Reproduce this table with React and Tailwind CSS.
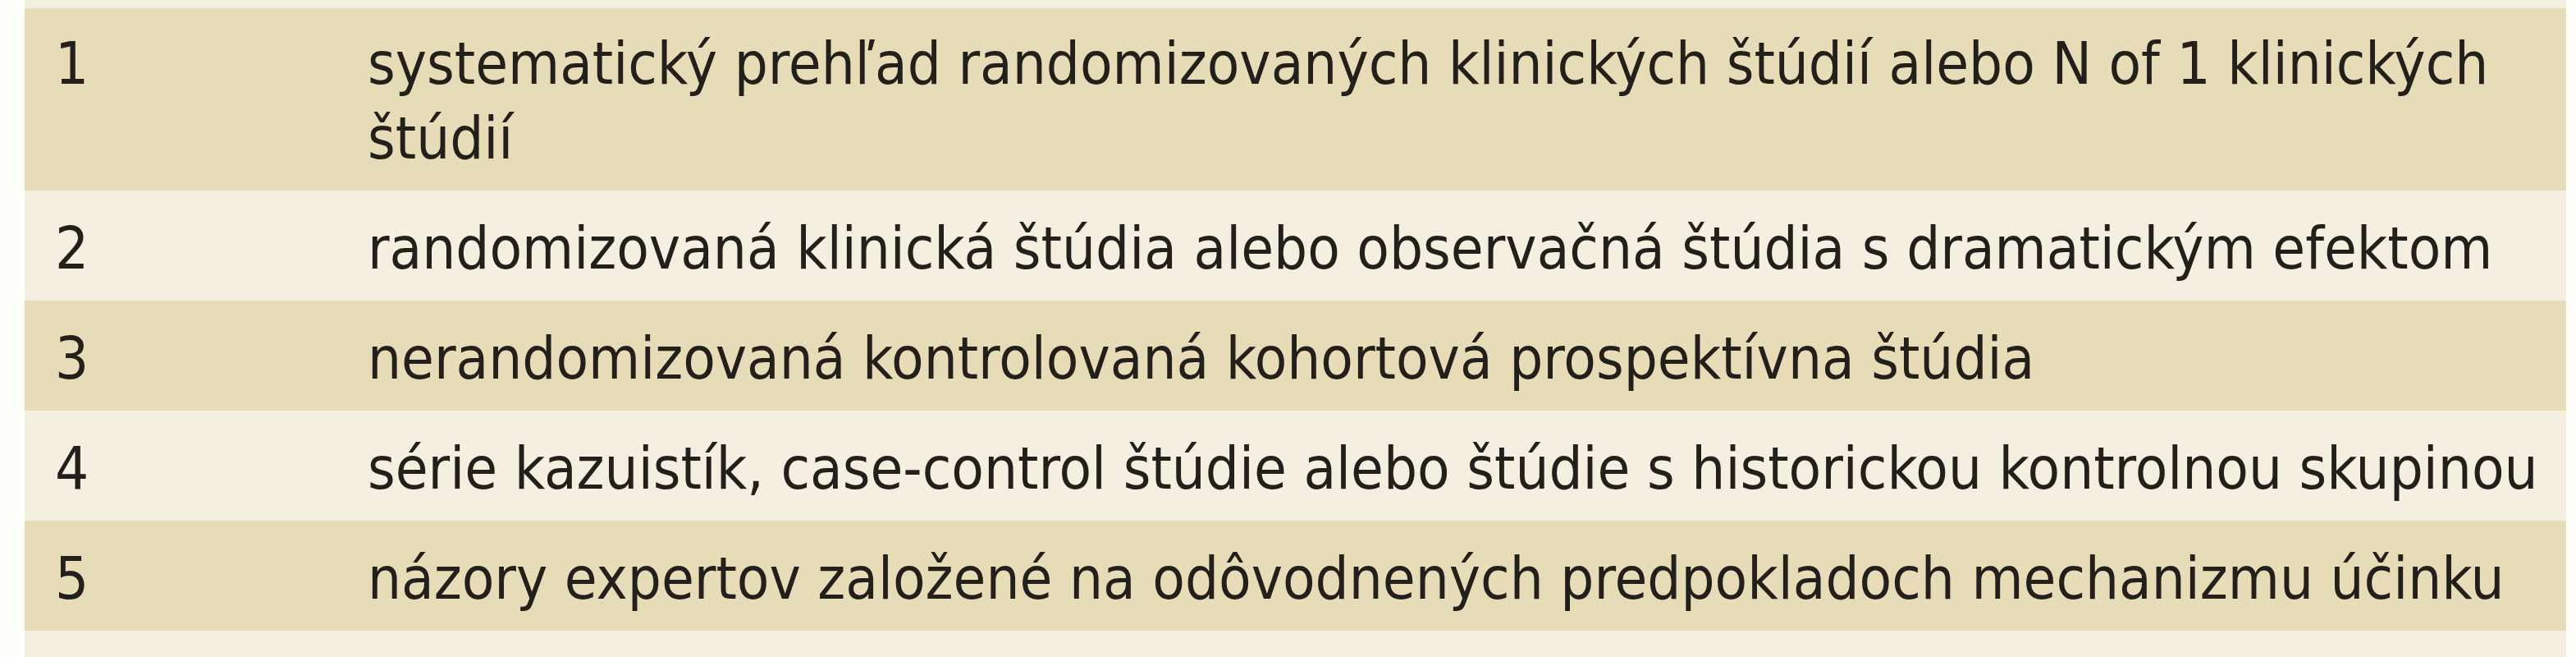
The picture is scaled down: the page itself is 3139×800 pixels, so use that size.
import React from 'react';

const rows = [
    { cislo: '1', text: 'systematický prehľad randomizovaných klinických štúdií alebo N of 1 klinických štúdií', tmavy: true, pad: 'pt-[22px] pb-[18px]' },
    { cislo: '2', text: 'randomizovaná klinická štúdia alebo observačná štúdia s dramatickým efektom', tmavy: false, pad: 'pt-[25px] pb-[18px]' },
    { cislo: '3', text: 'nerandomizovaná kontrolovaná kohortová prospektívna štúdia', tmavy: true, pad: 'pt-[25px] pb-[18px]' },
    { cislo: '4', text: 'série kazuistík, case-control štúdie alebo štúdie s historickou kontrolnou skupinou', tmavy: false, pad: 'pt-[25px] pb-[18px]' },
    { cislo: '5', text: 'názory expertov založené na odôvodnených predpokladoch mechanizmu účinku', tmavy: true, pad: 'pt-[25px] pb-[18px]' },
];

export default function App() {
    return (
        <div className="flex h-[800px] w-[3139px] overflow-hidden bg-[#fefefb]">
            <div
                className="ml-[30px] w-[3097px] bg-[#f4efe1] pt-[10px] text-[72px] leading-[91px] text-[#231f1a]"
                style={{ fontFamily: '"DejaVu Sans Condensed", "Liberation Sans", sans-serif' }}
            >
                {rows.map((r) => (
                    <div
                        key={r.cislo}
                        className={`flex items-start ${r.pad} ${r.tmavy ? 'bg-[#e6dcb7]' : 'bg-[#f4efe1]'}`}
                    >
                        <div className="w-[418px] shrink-0 pl-[37px]">{r.cislo}</div>
                        <div className="flex-1 pr-[10px]">{r.text}</div>
                    </div>
                ))}
            </div>
        </div>
    );
}
